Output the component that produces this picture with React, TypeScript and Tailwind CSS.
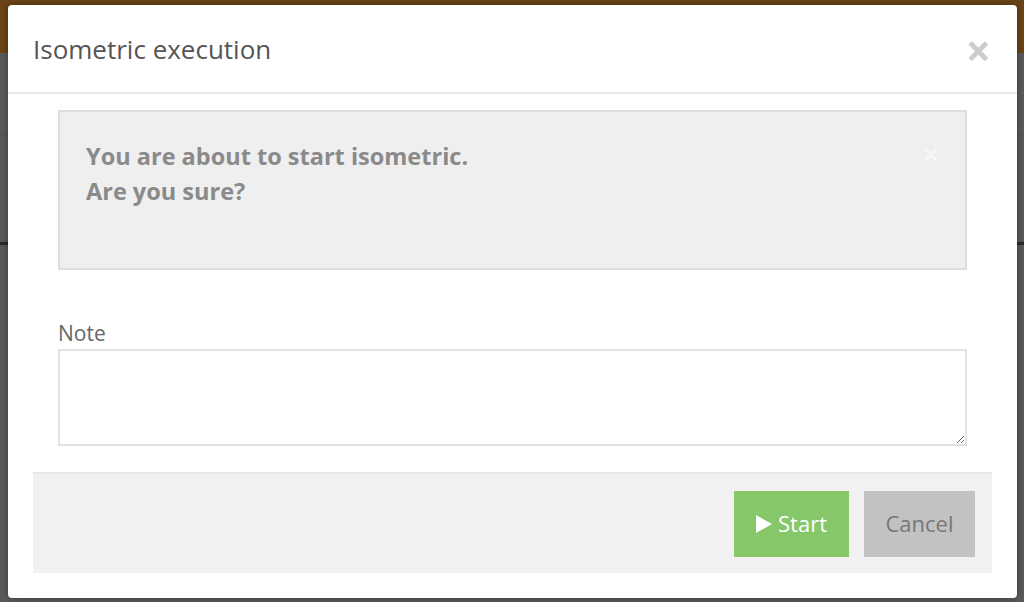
import { useState } from "react";

function PageBehind() {
  return (
    <div className="flex h-full flex-col">
      <div className="h-[53px] bg-[#6a4316]" />
      <div className="flex flex-1 flex-col bg-[#595959]">
        <div className="h-[82px] border-b border-[#505050]" />
        <div className="h-[110px] border-b-[3px] border-[#2a2a2a]" />
        <div className="flex-1" />
      </div>
    </div>
  );
}

export default function App() {
  const [note, setNote] = useState("");

  return (
    <div
      className="relative h-[602px] w-[1024px] overflow-hidden"
      style={{ fontFamily: '"Open Sans", "Noto Sans", sans-serif' }}
    >
      <PageBehind />

      <div className="absolute left-[8px] top-[5px] flex h-[593px] w-[1009px] flex-col rounded-[4px] bg-white shadow-[0_0_6px_rgba(0,0,0,0.35)]">
        <div className="flex h-[89px] items-center justify-between border-b-2 border-[#e8e8e8] pl-[25px] pr-[26px] pt-[2px]">
          <h1 className="text-[26px] text-[#555]">Isometric execution</h1>
          <button className="text-[44px] font-bold leading-none text-[#cccccc]">×</button>
        </div>

        <div className="px-[50px] pt-[16px]">
          <div className="relative h-[160px] border-2 border-[#dddddd] bg-[#efefef] px-[26px] pt-[27px]">
            <p className="text-[23.5px] font-bold leading-[35px] text-[#8a8a8a]">
              You are about to start isometric.
              <br />
              Are you sure?
            </p>
            <span className="absolute right-[26px] top-[28px] text-[28px] font-bold leading-none text-[#f7f7f7]">
              ×
            </span>
          </div>

          <label className="mt-[48px] block text-[21px] leading-[31px] text-[#666]">Note</label>
          <textarea
            value={note}
            onChange={(e) => setNote(e.target.value)}
            className="block h-[97px] w-full border-2 border-[#e2e2e2] bg-white p-2 text-[16px] text-[#555] outline-none"
          />
        </div>

        <div className="mx-[25px] mt-[26px] flex h-[101px] items-center justify-end gap-[15px] border-t-2 border-[#e6e6e6] bg-[#f1f1f1] pr-[17px]">
          <button className="flex h-[66px] w-[115px] items-center justify-center gap-[5px] bg-[#86c76a] pr-[2px] text-[22px] text-white">
            <svg width="19" height="20" viewBox="0 0 19 20">
              <path d="M2 1 L18 10 L2 19 Z" fill="white" />
            </svg>
            Start
          </button>
          <button className="h-[66px] w-[111px] bg-[#c2c2c2] text-[22px] text-[#777]">Cancel</button>
        </div>
      </div>
    </div>
  );
}
